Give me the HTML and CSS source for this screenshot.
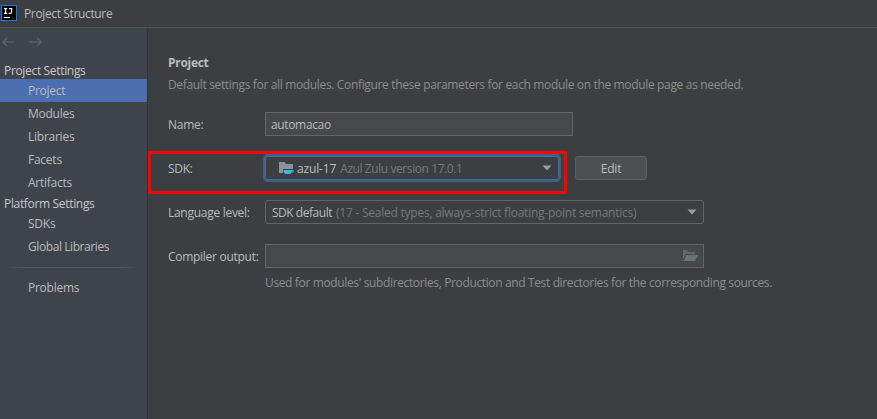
FILE: index.html
```html
<!DOCTYPE html>
<html lang="en">
<head>
<meta charset="utf-8">
<title>Project Structure</title>
<link rel="stylesheet" href="styles.css">
</head>
<body>
<div class="window">
  <header class="titlebar">
    <svg class="logo" width="16" height="16" viewBox="0 0 16 16"><path fill="#087cfa" d="M0 0h16v16H0z"/><path fill="#000" d="M1 1h14v14H1z"/><path fill="none" stroke="#fff" stroke-width="1.2" d="M3 3.6h3.2M4.6 3.6v4.6M3 8.3h3.2M8 3.6h2.6v3.5q0 1.2-1.2 1.2H7.6"/><path fill="#fff" d="M3 12h6v1H3z"/></svg>
    <span class="title">Project Structure</span>
  </header>
  <div class="body">
    <nav class="sidebar">
      <div class="history">
        <svg width="14" height="10" viewBox="0 0 14 10"><path d="M13 5H1M5 1L1 5l4 4"/></svg>
        <svg width="14" height="10" viewBox="0 0 14 10"><path d="M0 5h12M8 1l4 4-4 4"/></svg>
      </div>
      <div class="group g1">Project Settings</div>
      <div class="item selected">Project</div>
      <div class="item">Modules</div>
      <div class="item">Libraries</div>
      <div class="item">Facets</div>
      <div class="item">Artifacts</div>
      <div class="group g2">Platform Settings</div>
      <div class="item">SDKs</div>
      <div class="item long">Global Libraries</div>
      <div class="divider"></div>
      <div class="item">Problems</div>
    </nav>
    <main class="content">
      <h1>Project</h1>
      <p class="desc">Default settings for all modules. Configure these parameters for each module on the module page as needed.</p>
      <div class="row name-row"><span class="label">Name:</span><div class="field name"><span>automacao</span></div></div>
      <div class="row sdk-row"><span class="label">SDK:</span>
        <div class="combo sdk">
          <svg class="sdk-icon" width="16" height="16" viewBox="0 0 16 16"><path fill="#87939a" d="M1 2h5.500l1.500 2h7v5H5v4H1z"/><path fill="#40b6e0" d="M5.500 10h8.700q1.800 0 1.600 1.200-.2 1.200-2.100 1.300-.6 1.300-1.700 1.500H8Q5.500 13.500 5.500 10z"/><path fill="#3c3f41" d="M13.700 10.900h1v.6h-1z"/></svg>
          <span class="sdk-name">azul-17</span><span class="muted version">Azul Zulu version 17.0.1</span>
          <svg class="arrow" width="10" height="6" viewBox="0 0 10 6"><path d="M.5.500h9L5 5.500z"/></svg>
        </div>
        <button class="edit">Edit</button>
        <div class="highlight"></div>
      </div>
      <div class="row level-row"><span class="label">Language level:</span>
        <div class="combo level"><span class="default">SDK default</span><span class="muted semantics">(17 - Sealed types, always-strict floating-point semantics)</span>
          <svg class="arrow" width="10" height="6" viewBox="0 0 10 6"><path d="M.5.500h9L5 5.500z"/></svg>
        </div>
      </div>
      <div class="row output-row"><span class="label">Compiler output:</span>
        <div class="field output"><svg width="16" height="12" viewBox="0 0 16 12"><path fill="#64696c" d="M1 0h4l1.500 2H13v2H4L1 9.500z"/><path fill="#6a7277" d="M4.500 5H16l-3 6H1.500z"/></svg></div>
      </div>
      <p class="hint">Used for modules' subdirectories, Production and Test directories for the corresponding sources.</p>
    </main>
  </div>
</div>
</body>
</html>
```
FILE: styles.css
```css
* { box-sizing: border-box; }
body { margin: 0; background: #3c3f41; color: #bbb; font: 12px/16px "Open Sans", "Noto Sans", sans-serif; white-space: nowrap; }
.window { height: 419px; display: flex; flex-direction: column; overflow: hidden; }
.titlebar { height: 28px; flex: none; display: flex; align-items: center; padding-left: 1px; border-bottom: 1px solid #515151; }
.logo { margin-top: -1px; }
.title { margin-left: 7px; padding-top: 1px; letter-spacing: -.36px; }
.body { display: flex; flex: 1; }
.sidebar { width: 148px; flex: none; background: #3f434c; border-right: 1px solid #323232; }
.history { height: 34px; display: flex; gap: 13px; padding: 9px 0 0 2px; }
.history path { fill: none; stroke: #5b5d5e; stroke-width: 1.7; }
.group { padding-left: 4px; font-weight: 500; letter-spacing: -.33px; color: #c8c8c8; }
.g1 { height: 17px; line-height: 18px; }
.g2 { height: 18px; line-height: 20px; }
.item { height: 23px; line-height: 23px; padding-left: 28px; letter-spacing: -.25px; }
.long { letter-spacing: -.42px; }
.selected { background: #4b6eaf; }
.divider { height: 1px; margin: 9px 6px 8px; background: linear-gradient(90deg, transparent, #55575c 15%, #55575c 85%, transparent); }
.content { flex: 1; padding: 27px 0 0 20px; }
h1 { font-size: 12px; line-height: 16px; margin: 0; letter-spacing: -.3px; }
p { margin: 0; color: #8c8c8c; }
.desc { margin-top: 6px; letter-spacing: -.345px; }
.row { display: flex; height: 24px; align-items: center; }
.label { width: 97px; flex: none; padding-top: 2px; letter-spacing: -.28px; }
.name-row { margin-top: 19px; }
.field { height: 24px; border: 1px solid #646464; background: #45494a; display: flex; align-items: center; }
.field span, .combo span { padding-top: 2px; }
.name { width: 308px; padding-left: 5px; letter-spacing: -.35px; }
.sdk-row { position: relative; margin-top: 20px; }
.combo { height: 24px; border: 1px solid #646464; border-radius: 3px; display: flex; align-items: center; }
.sdk { width: 294px; border-color: #466d94; box-shadow: 0 0 0 2px #3d6185; padding: 0 6px 0 12px; }
.sdk-name { margin-left: 3px; letter-spacing: -.15px; }
.muted { color: #777; margin-left: 4px; }
.version { letter-spacing: -.42px; }
.default { letter-spacing: -.47px; }
.semantics { letter-spacing: -.24px; }
.arrow { margin-left: auto; fill: #9a9da0; }
.edit { width: 72px; height: 24px; margin-left: 16px; padding: 2px 0 0; border: 1px solid #5e6060; border-radius: 3px; background: #4c5052; color: #bbb; font: inherit; letter-spacing: -.2px; }
.highlight { position: absolute; left: -20px; top: -5px; width: 419px; height: 43px; border: 3px solid #f00; }
.level-row { margin-top: 20px; }
.level { width: 439px; padding: 0 6px; }
.output-row { margin-top: 20px; }
.output { width: 439px; padding-right: 5px; justify-content: flex-end; }
.hint { margin: 7px 0 0 97px; letter-spacing: -.363px; }
```
